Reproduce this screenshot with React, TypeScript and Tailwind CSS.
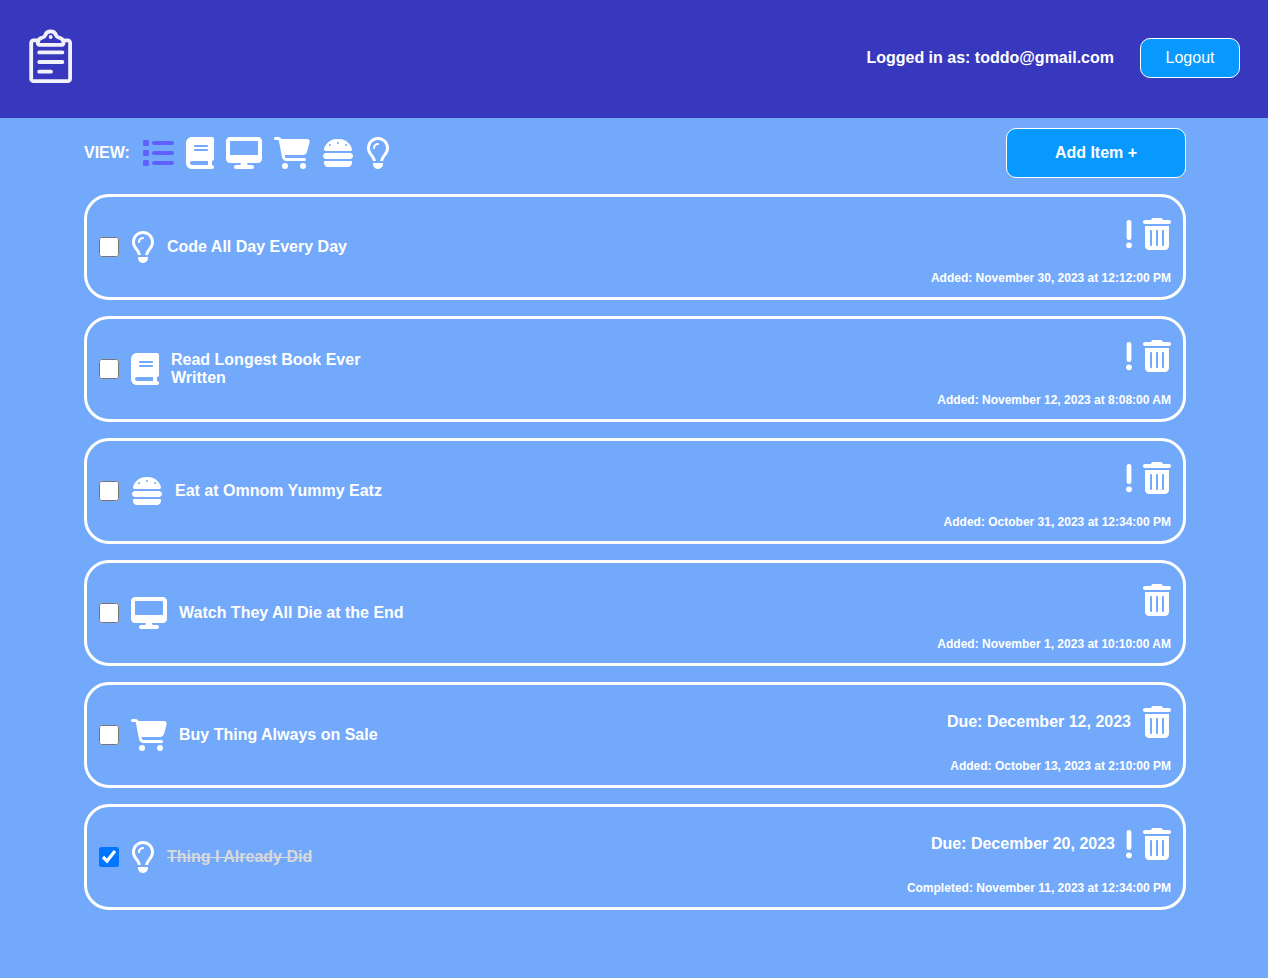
import { useState } from "react";
import type { IconType } from "react-icons";
import {
  FaBook,
  FaBurger,
  FaCartShopping,
  FaDesktop,
  FaList,
  FaRegLightbulb,
  FaTrashCan,
} from "react-icons/fa6";

type Category = "read" | "watch" | "buy" | "eat" | "other";

interface Item {
  id: number;
  title: string;
  category: Category;
  stamp: string;
  due?: string;
  urgent?: boolean;
  done?: boolean;
}

const categoryIcons: Record<Category, { icon: IconType; size: string; label: string }> = {
  read: { icon: FaBook, size: "h-8 w-7", label: "Read" },
  watch: { icon: FaDesktop, size: "h-8 w-9", label: "Watch" },
  buy: { icon: FaCartShopping, size: "h-8 w-9", label: "Buy" },
  eat: { icon: FaBurger, size: "h-8 w-8", label: "Eat" },
  other: { icon: FaRegLightbulb, size: "h-8 w-6", label: "Other" },
};

const categories: Category[] = ["read", "watch", "buy", "eat", "other"];

const initialItems: Item[] = [
  { id: 1, title: "Code All Day Every Day", category: "other", stamp: "Added: November 30, 2023 at 12:12:00 PM", urgent: true },
  { id: 2, title: "Read Longest Book Ever Written", category: "read", stamp: "Added: November 12, 2023 at 8:08:00 AM", urgent: true },
  { id: 3, title: "Eat at Omnom Yummy Eatz", category: "eat", stamp: "Added: October 31, 2023 at 12:34:00 PM", urgent: true },
  { id: 4, title: "Watch They All Die at the End", category: "watch", stamp: "Added: November 1, 2023 at 10:10:00 AM" },
  { id: 5, title: "Buy Thing Always on Sale", category: "buy", stamp: "Added: October 13, 2023 at 2:10:00 PM", due: "Due: December 12, 2023" },
  { id: 6, title: "Thing I Already Did", category: "other", stamp: "Completed: November 11, 2023 at 12:34:00 PM", due: "Due: December 20, 2023", urgent: true, done: true },
];

function ClipboardLogo() {
  return (
    <svg
      viewBox="0 0 45 60"
      className="h-[60px] w-[45px] text-[#f2f2fa]"
      fill="none"
      stroke="currentColor"
      strokeWidth="3.8"
      strokeLinecap="round"
      strokeLinejoin="round"
      aria-hidden="true"
    >
      <path d="M9 12.4H5.6a2.4 2.4 0 0 0-2.4 2.4v36a2.4 2.4 0 0 0 2.4 2.4h34.1a2.4 2.4 0 0 0 2.4-2.4v-36a2.4 2.4 0 0 0-2.4-2.4h-3.4" />
      <path d="M11.4 16.8a1.6 1.6 0 0 1-1.6-1.9c.4-3 2.1-5 4.6-5.3 1.5-.2 2.2-.9 2.7-2.300C17.900 4.800 20 3.300 22.650 3.300s4.750 1.500 5.550 4c.5 1.400 1.200 2.100 2.700 2.300 2.500.3 4.200 2.300 4.600 5.300a1.600 1.600 0 0 1-1.600 1.900z" />
      <circle cx="22.65" cy="9" r="1.9" fill="currentColor" stroke="none" />
      <path d="M11.2 24.4h23.2M11.2 34h23.2M11.2 43.700h11.800" />
    </svg>
  );
}

function UrgentMark() {
  return (
    <svg viewBox="0 0 64 512" className="h-8 w-1 overflow-visible" fill="currentColor" role="img" aria-label="Urgent">
      <rect x="-6" y="32" width="76" height="320" rx="36" />
      <circle cx="32" cy="436" r="46" />
    </svg>
  );
}

function ItemCard({ item, onToggle, onDelete }: { item: Item; onToggle: () => void; onDelete: () => void }) {
  const { icon: Icon, size } = categoryIcons[item.category];
  const inputId = `item-${item.id}`;
  return (
    <li className="flex min-h-[106px] items-stretch justify-between rounded-[25px] border-3 border-white px-3">
      <div className="flex max-w-80 items-center gap-3">
        <input id={inputId} type="checkbox" checked={!!item.done} onChange={onToggle} className="size-5 shrink-0" />
        <Icon className={`${size} shrink-0`} />
        <label htmlFor={inputId} className={item.done ? "text-[#d9d9d9] line-through" : ""}>
          {item.title}
        </label>
      </div>
      <div className="flex flex-col items-end justify-between pt-[21px] pb-3">
        <div className="flex items-center gap-3">
          {item.due && <span>{item.due}</span>}
          {item.urgent && <UrgentMark />}
          <button type="button" aria-label={`Delete ${item.title}`} onClick={onDelete}>
            <FaTrashCan className="h-8 w-7" />
          </button>
        </div>
        <span className="text-xs leading-[14px]">{item.stamp}</span>
      </div>
    </li>
  );
}

export default function App() {
  const [items, setItems] = useState(initialItems);
  const [view, setView] = useState<Category | "all">("all");
  const shown = view === "all" ? items : items.filter((i) => i.category === view);

  return (
    <div className="min-h-screen bg-[#73a9fb] font-['Liberation_Sans',Arial,sans-serif] text-base leading-[18px] font-bold text-white">
      <header className="flex items-center justify-between bg-[#3838bf] px-7 pt-7 pb-[30px]">
        <ClipboardLogo />
        <div className="flex items-center gap-[26px]">
          <span>Logged in as: toddo@gmail.com</span>
          <button type="button" className="h-10 w-[100px] rounded-[10px] border border-white bg-[#0899ff] font-normal">
            Logout
          </button>
        </div>
      </header>
      <main className="flex flex-col gap-4 pt-[10px] pr-[82px] pb-4 pl-[84px]">
        <div className="flex items-center justify-between">
          <nav className="flex items-center gap-3">
            <span>VIEW:</span>
            <button type="button" aria-label="All" onClick={() => setView("all")} className={view === "all" ? "text-[#6060ff]" : ""}>
              <FaList className="size-8" />
            </button>
            {categories.map((c) => {
              const { icon: Icon, size, label } = categoryIcons[c];
              return (
                <button key={c} type="button" aria-label={label} onClick={() => setView(c)} className={view === c ? "text-[#6060ff]" : ""}>
                  <Icon className={size} />
                </button>
              );
            })}
          </nav>
          <button type="button" className="h-[50px] w-[180px] rounded-[10px] border border-white bg-[#0899ff]">
            Add Item +
          </button>
        </div>
        <ul className="flex flex-col gap-4">
          {shown.map((item) => (
            <ItemCard
              key={item.id}
              item={item}
              onToggle={() => setItems(items.map((i) => (i.id === item.id ? { ...i, done: !i.done } : i)))}
              onDelete={() => setItems(items.filter((i) => i.id !== item.id))}
            />
          ))}
        </ul>
      </main>
    </div>
  );
}
